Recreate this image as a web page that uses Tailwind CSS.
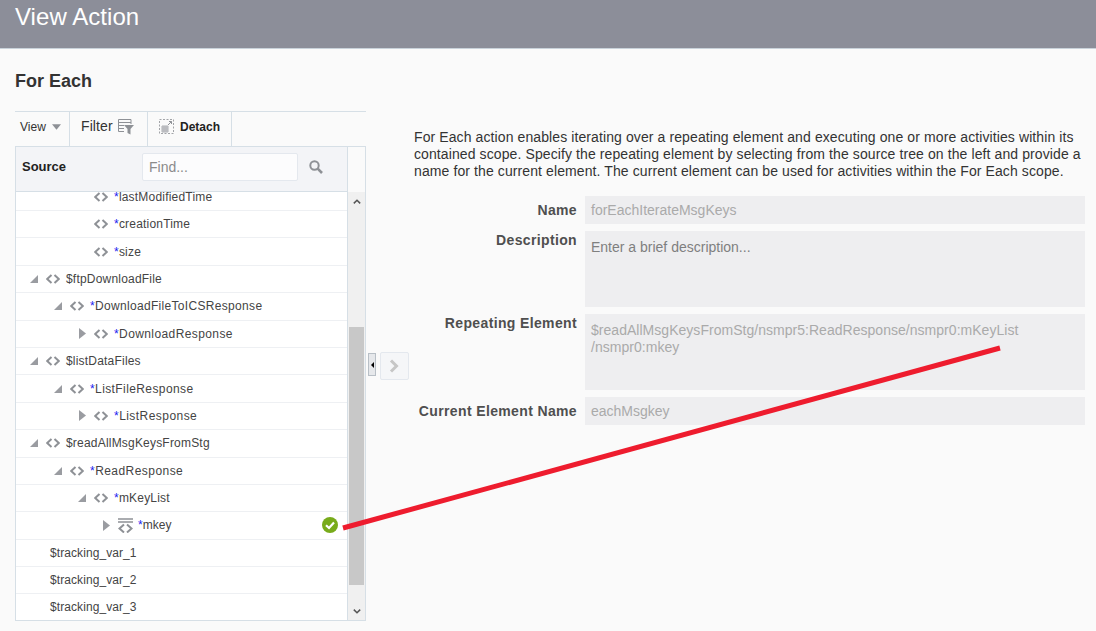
<!DOCTYPE html>
<html lang="en">

<head>
    <meta charset="UTF-8">
    <title>View Action</title>
    <script src="https://cdn.jsdelivr.net/npm/@tailwindcss/browser@4"></script>
</head>

<body class="relative w-[1096px] h-[631px] overflow-hidden bg-[#fafafa] font-['Liberation_Sans',Arial,sans-serif]">
    <svg class="hidden">
        <symbol id="code" viewBox="0 0 14 10">
            <path d="M5.5 1 1.2 5l4.3 4M8.5 1l4.3 4-4.3 4" fill="none" stroke="#8e9196" stroke-width="2"/>
        </symbol>
        <symbol id="open" viewBox="0 0 8 8">
            <path d="M8 0V8H0Z" fill="#9a9ca1"/>
        </symbol>
        <symbol id="closed" viewBox="0 0 7 11">
            <path d="M0 0 7 5.5 0 11Z" fill="#9a9ca1"/>
        </symbol>
    </svg>

    <header class="h-[49px] bg-[#8c8e99] border-b border-[#c9d2da] pl-[15px]">
        <h1 class="text-[24px] leading-[34px] tracking-[0.05px] text-white">View Action</h1>
    </header>

    <main class="flex">
        <section class="w-[351px] ml-[15px] shrink-0">
            <h2 class="mt-[22px] h-[40px] text-[18px] leading-[20px] font-bold text-[#333]">For Each</h2>

            <div class="flex h-[35px] border-t border-[#d6dfe6] text-[#333]">
                <div class="w-[55px] flex items-center pl-[5px] pb-[5px] gap-[6px] border-r border-[#d6dfe6] text-[12px]">
                    View
                    <svg class="w-[9px] h-[6px]" viewBox="0 0 10 6"><path d="M0 0H10L5 6Z" fill="#8e9196"/></svg>
                </div>
                <div class="w-[78px] flex items-center pl-[11px] pb-[5px] gap-[5px] border-r border-[#d6dfe6] text-[14px] tracking-[0.1px]">
                    Filter
                    <svg class="w-[16px] h-[16px]" viewBox="0 0 16 16">
                        <path d="M.5.5H13M.5 3.5H13M.5 6.5H6M.5 9.5H6M.5 12.5H6M.5.5V12.5M13 .5V5" fill="none" stroke="#8e9196"/>
                        <path d="M6 6H16L12.5 10V15.5L9.5 14V10Z" fill="#8e9196"/>
                    </svg>
                </div>
                <div class="w-[84px] flex items-center pl-[11px] pb-[5px] gap-[6px] border-r border-[#d6dfe6] text-[12px] font-bold text-[#222]">
                    <svg class="w-[15px] h-[15px]" viewBox="0 0 15 15">
                        <rect x=".5" y=".5" width="14" height="14" fill="none" stroke="#a2a4a8" stroke-dasharray="2 1.5"/>
                        <path d="M3 7H9V13H3ZM3 9H9M3 11H9M5 7V13M7 7V13" fill="none" stroke="#8e9196" stroke-width=".7"/>
                        <path d="M9 6 12.5 2.5M10 2.5H12.5V5" fill="none" stroke="#8e9196"/>
                    </svg>
                    Detach
                </div>
            </div>

            <div class="h-[475px] flex border border-[#d6dfe6] bg-white">
                <div class="w-[332px] shrink-0 border-r border-[#d6dfe6]">
                    <div class="h-[45px] flex items-center bg-[#f3f4f7] border-b border-[#d6dfe6] pl-[6px] pb-[4px]">
                        <span class="w-[120px] text-[13px] font-bold text-[#222]">Source</span>
                        <div class="w-[156px] h-[28px] flex items-center pl-[6px] bg-[#fcfcfd] border border-[#e4e8ee] rounded-[2px] text-[14px] text-[#8b8b8b]">Find...</div>
                        <svg class="ml-[11px] w-[14px] h-[14px]" viewBox="0 0 14 14">
                            <circle cx="5.5" cy="5.5" r="4.2" fill="none" stroke="#8e9196" stroke-width="2"/>
                            <path d="M8.7 8.7 13 13" stroke="#8e9196" stroke-width="2.6"/>
                        </svg>
                    </div>

                    <div class="text-[12px] text-[#444] tracking-[0.2px]">
                        <div class="h-[19px] overflow-hidden flex items-end pb-[4px] pl-[78px] border-b border-[#eef0f3]">
                            <svg class="w-[14px] h-[10px] mb-[4px]"><use href="#code"/></svg>
                            <span class="ml-[6px]"><span class="text-[#2222ee]">*</span>lastModifiedTime</span>
                        </div>
                        <div class="h-[27.4px] flex items-center pl-[78px] border-b border-[#eef0f3]">
                            <svg class="w-[14px] h-[10px]"><use href="#code"/></svg>
                            <span class="ml-[6px]"><span class="text-[#2222ee]">*</span>creationTime</span>
                        </div>
                        <div class="h-[27.4px] flex items-center pl-[78px] border-b border-[#eef0f3]">
                            <svg class="w-[14px] h-[10px]"><use href="#code"/></svg>
                            <span class="ml-[6px]"><span class="text-[#2222ee]">*</span>size</span>
                        </div>
                        <div class="h-[27.4px] flex items-center pl-[14px] border-b border-[#eef0f3]">
                            <svg class="w-[8px] h-[8px] mr-[8px]"><use href="#open"/></svg>
                            <svg class="w-[14px] h-[10px]"><use href="#code"/></svg>
                            <span class="ml-[6px]">$ftpDownloadFile</span>
                        </div>
                        <div class="h-[27.4px] flex items-center pl-[38px] border-b border-[#eef0f3]">
                            <svg class="w-[8px] h-[8px] mr-[8px]"><use href="#open"/></svg>
                            <svg class="w-[14px] h-[10px]"><use href="#code"/></svg>
                            <span class="ml-[6px] tracking-[0.32px]"><span class="text-[#2222ee]">*</span>DownloadFileToICSResponse</span>
                        </div>
                        <div class="h-[27.4px] flex items-center pl-[63px] border-b border-[#eef0f3]">
                            <svg class="w-[7px] h-[11px] mr-[8px]"><use href="#closed"/></svg>
                            <svg class="w-[14px] h-[10px]"><use href="#code"/></svg>
                            <span class="ml-[6px] tracking-[0.4px]"><span class="text-[#2222ee]">*</span>DownloadResponse</span>
                        </div>
                        <div class="h-[27.4px] flex items-center pl-[14px] border-b border-[#eef0f3]">
                            <svg class="w-[8px] h-[8px] mr-[8px]"><use href="#open"/></svg>
                            <svg class="w-[14px] h-[10px]"><use href="#code"/></svg>
                            <span class="ml-[6px]">$listDataFiles</span>
                        </div>
                        <div class="h-[27.4px] flex items-center pl-[38px] border-b border-[#eef0f3]">
                            <svg class="w-[8px] h-[8px] mr-[8px]"><use href="#open"/></svg>
                            <svg class="w-[14px] h-[10px]"><use href="#code"/></svg>
                            <span class="ml-[6px] tracking-[0.4px]"><span class="text-[#2222ee]">*</span>ListFileResponse</span>
                        </div>
                        <div class="h-[27.4px] flex items-center pl-[63px] border-b border-[#eef0f3]">
                            <svg class="w-[7px] h-[11px] mr-[8px]"><use href="#closed"/></svg>
                            <svg class="w-[14px] h-[10px]"><use href="#code"/></svg>
                            <span class="ml-[6px] tracking-[0.45px]"><span class="text-[#2222ee]">*</span>ListResponse</span>
                        </div>
                        <div class="h-[27.4px] flex items-center pl-[14px] border-b border-[#eef0f3]">
                            <svg class="w-[8px] h-[8px] mr-[8px]"><use href="#open"/></svg>
                            <svg class="w-[14px] h-[10px]"><use href="#code"/></svg>
                            <span class="ml-[6px]">$readAllMsgKeysFromStg</span>
                        </div>
                        <div class="h-[27.4px] flex items-center pl-[38px] border-b border-[#eef0f3]">
                            <svg class="w-[8px] h-[8px] mr-[8px]"><use href="#open"/></svg>
                            <svg class="w-[14px] h-[10px]"><use href="#code"/></svg>
                            <span class="ml-[6px] tracking-[0.45px]"><span class="text-[#2222ee]">*</span>ReadResponse</span>
                        </div>
                        <div class="h-[27.4px] flex items-center pl-[62px] border-b border-[#eef0f3]">
                            <svg class="w-[8px] h-[8px] mr-[8px]"><use href="#open"/></svg>
                            <svg class="w-[14px] h-[10px]"><use href="#code"/></svg>
                            <span class="ml-[6px]"><span class="text-[#2222ee]">*</span>mKeyList</span>
                        </div>
                        <div class="h-[27.4px] flex items-center pl-[87px] border-b border-[#eef0f3]">
                            <svg class="w-[7px] h-[11px] mr-[8px]"><use href="#closed"/></svg>
                            <svg class="w-[15px] h-[15px]" viewBox="0 0 15 15">
                                <path d="M0 1H15M0 4H15" stroke="#8e9196" stroke-width="1.3" fill="none"/>
                                <path d="M6 6.5 1.5 10.5 6 14.5M9 6.5 13.5 10.5 9 14.5" fill="none" stroke="#8e9196" stroke-width="2"/>
                            </svg>
                            <span class="ml-[5px] tracking-[0.05px]"><span class="text-[#2222ee]">*</span>mkey</span>
                            <svg class="ml-auto mr-[9px] w-[16px] h-[16px]" viewBox="0 0 16 16">
                                <circle cx="8" cy="8" r="8" fill="#78ab1b"/>
                                <path d="M4 8.2 7 11 12 5.5" fill="none" stroke="#fff" stroke-width="2.2"/>
                            </svg>
                        </div>
                        <div class="h-[27.4px] flex items-center pl-[34px] tracking-[0.08px] border-b border-[#eef0f3]">$tracking_var_1</div>
                        <div class="h-[27.4px] flex items-center pl-[34px] tracking-[0.08px] border-b border-[#eef0f3]">$tracking_var_2</div>
                        <div class="h-[27px] flex items-center pl-[34px] pb-[1px] tracking-[0.08px]">$tracking_var_3</div>
                    </div>
                </div>

                <div class="flex-1 flex flex-col bg-[#fafafa]">
                    <div class="h-[45px]"></div>
                    <div class="flex-1 flex flex-col bg-[#f0f0f0] px-[1px]">
                        <div class="h-[18px] flex items-center justify-center">
                            <svg class="w-[8px] h-[5px]" viewBox="0 0 8 5"><path d="M.8 4.4 4 1.2 7.2 4.4" fill="none" stroke="#555" stroke-width="1.5"/></svg>
                        </div>
                        <div class="mt-[117px] h-[258px] bg-[#c8c8c8]"></div>
                        <div class="flex-1 flex items-end justify-center pb-[6px]">
                            <svg class="w-[8px] h-[5px]" viewBox="0 0 8 5"><path d="M.8.6 4 3.8 7.2.6" fill="none" stroke="#555" stroke-width="1.5"/></svg>
                        </div>
                    </div>
                </div>
            </div>
        </section>

        <div class="w-[43px] shrink-0 pt-[303px] pl-[2px] flex items-start gap-[4px]">
            <div class="w-[8px] h-[23px] mt-[1px] flex items-center justify-center bg-[#e6e8eb] border border-[#b8bfc6]">
                <svg class="w-[3px] h-[6px] shrink-0" viewBox="0 0 3 6"><path d="M3 0V6L0 3Z" fill="#000"/></svg>
            </div>
            <div class="w-[29px] h-[28px] flex items-center justify-center bg-[#f5f6f8] border border-[#e4e8ee] rounded-[2px]">
                <svg class="w-[10px] h-[14px] -ml-[2px]" viewBox="0 0 10 14"><path d="M2 1.5 7.5 7 2 12.5" fill="none" stroke="#c6c6c6" stroke-width="3"/></svg>
            </div>
        </div>

        <section class="w-[676px] shrink-0">
            <p class="ml-[5px] mt-[80px] w-[672px] text-[14px] leading-[17px] tracking-[0.1px] text-[#333]">For Each action enables iterating over a repeating element and executing one or more activities within its contained scope. Specify the repeating element by selecting from the source tree on the left and provide a name for the current element. The current element can be used for activities within the For Each scope.</p>

            <div class="mt-[16px] grid grid-cols-[168px_500px] gap-x-[8px] gap-y-[7px] text-[14px]">
                <label class="h-[28px] pt-[1px] flex items-center justify-end font-bold tracking-[0.36px] text-[#4f4f4f]">Name</label>
                <div class="h-[28px] pt-[1px] flex items-center px-[6px] bg-[#eeeef0] text-[#aaaaaa]">forEachIterateMsgKeys</div>

                <label class="leading-[19px] text-right font-bold tracking-[0.36px] text-[#4f4f4f]">Description</label>
                <div class="h-[76px] px-[6px] pt-[6px] bg-[#eeeef0] text-[#7f7f7f]">Enter a brief description...</div>

                <label class="leading-[19px] text-right font-bold tracking-[0.36px] text-[#4f4f4f]">Repeating Element</label>
                <div class="h-[76px] px-[6px] pt-[8px] bg-[#eeeef0] leading-[17px] tracking-[0.03px] text-[#aaaaaa]">$readAllMsgKeysFromStg/nsmpr5:ReadResponse/nsmpr0:mKeyList<br>/nsmpr0:mkey</div>

                <label class="h-[28px] pt-[1px] flex items-center justify-end font-bold tracking-[0.36px] text-[#4f4f4f]">Current Element Name</label>
                <div class="h-[28px] pt-[1px] flex items-center px-[6px] bg-[#eeeef0] text-[#aaaaaa]">eachMsgkey</div>
            </div>
        </section>
    </main>

    <!-- red annotation drawn over the screenshot -->
    <svg class="absolute left-0 top-0 w-[1096px] h-[631px] pointer-events-none" viewBox="0 0 1096 631">
        <path d="M343 528 1000 348" stroke="#ee1c2e" stroke-width="5" fill="none"/>
    </svg>
</body>

</html>
